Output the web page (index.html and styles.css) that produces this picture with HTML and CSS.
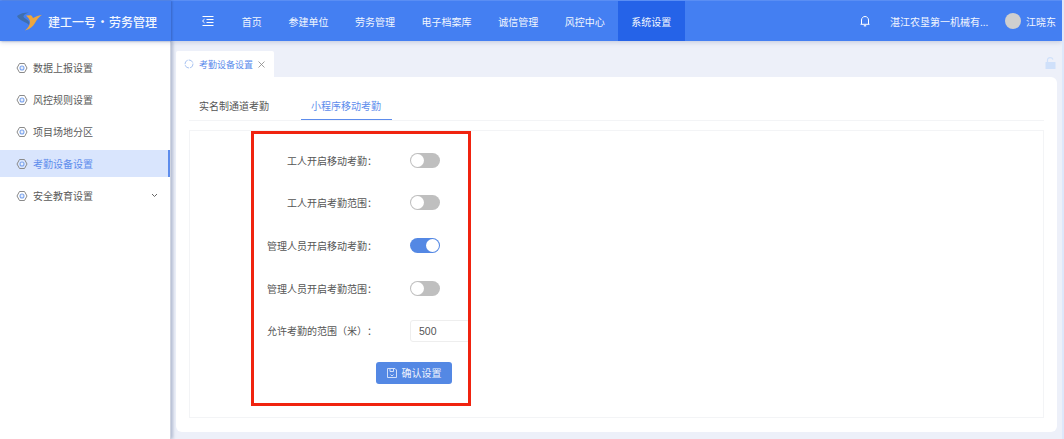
FILE: index.html
```html
<!DOCTYPE html>
<html>
    <head>
        <meta charset="UTF-8">
        <meta name="viewport" content="width=device-width, initial-scale=1.0"/>
        <title>建工一号 · 劳务管理</title>
        <link rel="stylesheet" href="styles.css">
    </head>
    <body>
        <header class="topbar">
            <div class="brand">
                <svg class="brand-logo" width="27" height="20" viewBox="0 0 27 20">
                    <path d="M1 5C4 2.500 8 1.500 13 1.500C10 2.500 8 3.500 7.500 5C7 7 11 8 12.500 10C13.500 11.500 13.500 13 13 14C11 11 3 10 1 5Z" fill="#3f6fae"/>
                    <path d="M10 4.500L15 4.200C16 5 16.500 6 17 7C19 6 22 4.500 26 3.800C23 6 20.500 9 19 12C17 15.500 14 18 9 19.500C12 17 14 14 14 11C14 8.500 12 6.500 10 4.500Z" fill="#eda63f"/>
                </svg>
                <span class="brand-name">建工一号 · 劳务管理</span>
            </div>
            <svg class="fold-icon" width="12" height="10" viewBox="0 0 12 10">
                <path d="M0.500 0.500H11.500M4.500 3.500H11.500M4.500 6.500H11.500M0.500 9.500H11.500M2.500 3.200L0.500 5L2.500 6.800" fill="none" stroke="#fff" stroke-width="1"/>
            </svg>
            <nav class="main-nav">
                <a class="nav-item">首页</a>
                <a class="nav-item">参建单位</a>
                <a class="nav-item">劳务管理</a>
                <a class="nav-item">电子档案库</a>
                <a class="nav-item">诚信管理</a>
                <a class="nav-item">风控中心</a>
                <a class="nav-item active">系统设置</a>
            </nav>
            <div class="user-area">
                <svg class="bell" width="10" height="12" viewBox="0 0 10 12">
                    <path d="M1.500 9V5C1.500 3 3 1.500 5 1.500S8.500 3 8.500 5V9M0.500 9.300H9.500" fill="none" stroke="#fff" stroke-width="1"/>
                    <path d="M3.800 10.800H6.200" stroke="#fff" stroke-width="1.200"/>
                </svg>
                <span class="company">湛江农垦第一机械有...</span>
                <span class="avatar"></span>
                <span class="username">江晓东</span>
            </div>
        </header>

        <div class="layout">
            <aside class="sidebar">
                <a class="side-item"><svg class="hex" viewBox="0 0 12 12"><use href="#hex-icon"/></svg>数据上报设置</a>
                <a class="side-item"><svg class="hex" viewBox="0 0 12 12"><use href="#hex-icon"/></svg>风控规则设置</a>
                <a class="side-item"><svg class="hex" viewBox="0 0 12 12"><use href="#hex-icon"/></svg>项目场地分区</a>
                <a class="side-item active"><svg class="hex" viewBox="0 0 12 12"><use href="#hex-icon"/></svg>考勤设备设置</a>
                <a class="side-item"><svg class="hex" viewBox="0 0 12 12"><use href="#hex-icon"/></svg>安全教育设置
                    <svg class="chevron" width="7" height="5" viewBox="0 0 7 5"><path d="M1 1L3.500 3.500L6 1" fill="none" stroke="#666" stroke-width="1"/></svg>
                </a>
            </aside>

            <main class="content">
                <div class="tab-strip">
                    <div class="page-tab">
                        <svg width="10" height="10" viewBox="0 0 10 10"><circle cx="5" cy="5" r="4" fill="none" stroke="#a9c4f2" stroke-width="1" stroke-dasharray="5 1"/></svg>
                        <span>考勤设备设置</span>
                        <svg class="tab-close" width="7" height="7" viewBox="0 0 7 7"><path d="M0.500 0.500L6.500 6.500M6.500 0.500L0.500 6.500" stroke="#888" stroke-width="0.800"/></svg>
                    </div>
                    <svg class="lock" width="11" height="12" viewBox="0 0 11 12">
                        <path d="M2.500 5V3C2.500 1.500 3.800 0.700 5 0.700S7.500 1.300 8 2.500" fill="none" stroke="#cfe0fa" stroke-width="1.200"/>
                        <rect x="0.500" y="5" width="10" height="7" rx="0.500" fill="#cfe0fa"/>
                    </svg>
                </div>
                <section class="card">
                    <div class="inner-tabs">
                        <span class="inner-tab">实名制通道考勤</span>
                        <span class="inner-tab active">小程序移动考勤</span>
                    </div>
                    <form class="settings">
                        <div class="form-row"><label>工人开启移动考勤：</label><span class="switch"></span></div>
                        <div class="form-row"><label>工人开启考勤范围：</label><span class="switch"></span></div>
                        <div class="form-row"><label>管理人员开启移动考勤：</label><span class="switch on"></span></div>
                        <div class="form-row"><label>管理人员开启考勤范围：</label><span class="switch"></span></div>
                        <div class="form-row"><label>允许考勤的范围（米）：</label><input class="range-input" type="text" value="500"></div>
                        <div class="form-actions">
                            <button class="confirm" type="button">
                                <svg width="10" height="10" viewBox="0 0 10 10"><path d="M0.500 0.500H8L9.500 2V9.500H0.500ZM3 0.500V3.500H6.500V0.500M3.500 6.500L5 8L6.500 6.500" fill="none" stroke="#dfe8fa" stroke-width="0.900"/></svg>
                                确认设置
                            </button>
                        </div>
                    </form>
                </section>
            </main>
        </div>

        <div class="highlight"></div>

        <svg class="defs" width="0" height="0">
            <symbol id="hex-icon" viewBox="0 0 12 12">
                <path d="M3.500 1.500H8.500L11 6L8.500 10.500H3.500L1 6Z" fill="none" stroke="#8a8a8a" stroke-width="1" stroke-linejoin="round"/>
                <circle cx="6" cy="6" r="2" fill="#e8effc" stroke="#7ea6ee" stroke-width="1.100"/>
            </symbol>
        </svg>
    </body>
</html>
```

FILE: styles.css
```css
*
{
    box-sizing: border-box;
}

html, body
{
    height: 100%;
}

body
{
    margin: 0;
    overflow: hidden;
    position: relative;
    background: #edf0f9;
    border-right: 2px solid #dde8fb;
    color: #555;
    font-family: "Noto Sans CJK SC", "Liberation Sans", sans-serif;
    font-size: 10px;
}

.topbar
{
    display: flex;
    align-items: center;
    height: 41px;
    background: #447ff2;
    border-top: 1px solid #5a8ef4;
    color: #f2f6fe;
    box-shadow: 0 1px 5px rgba(60, 80, 130, 0.25);
    position: relative;
    z-index: 2;
}

.brand
{
    display: flex;
    align-items: center;
    width: 171px;
    height: 100%;
    padding-left: 16px;
    box-shadow: 1px 0 2px rgba(40, 70, 140, 0.45);
}

.brand-logo
{
    margin-right: 5px;
}

.brand-name
{
    font-size: 12px;
    font-weight: 500;
    word-spacing: -2.200px;
    white-space: nowrap;
}

.fold-icon
{
    margin-left: 31px;
}

.main-nav
{
    display: flex;
    height: 100%;
    margin-left: 14.500px;
}

.nav-item
{
    display: flex;
    align-items: center;
    padding: 0 13.300px;
}

.nav-item.active
{
    background: #2563e8;
}

.user-area
{
    display: flex;
    align-items: center;
    margin-left: auto;
    padding-right: 6px;
}

.company
{
    margin-left: 20px;
    width: 84px;
    white-space: nowrap;
}

.avatar
{
    width: 16px;
    height: 16px;
    margin: 0 5px 0 31px;
    border-radius: 50%;
    background: #cfcfcf;
}

.username
{
    width: 30px;
    white-space: nowrap;
}

.layout
{
    display: flex;
    height: 398px;
}

.sidebar
{
    width: 171px;
    flex: none;
    padding-top: 13px;
    background: #fff;
    border-right: 1px solid #cfd4e0;
    box-shadow: 2px 0 3px rgba(90, 110, 150, 0.4);
    position: relative;
    z-index: 1;
}

.side-item
{
    display: flex;
    align-items: center;
    height: 27px;
    margin-bottom: 5px;
    padding-left: 16px;
    color: #5a5a5a;
}

.side-item.active
{
    background: #d9e5fd;
    color: #5d8cec;
    border-right: 2px solid #5d8cec;
}

.hex
{
    width: 12px;
    height: 12px;
    margin-right: 5px;
}

.chevron
{
    margin-left: auto;
    margin-right: 12px;
}

.content
{
    flex: 1;
    min-width: 0;
    padding: 10px 5px 0 5px;
}

.tab-strip
{
    display: flex;
    align-items: flex-end;
    justify-content: space-between;
    height: 26px;
}

.page-tab
{
    display: flex;
    align-items: center;
    width: 98px;
    height: 26px;
    padding-left: 8px;
    background: #fff;
    color: #5d8cec;
    font-size: 9px;
    border-radius: 2px 2px 0 0;
}

.page-tab span
{
    margin-left: 5px;
    white-space: nowrap;
}

.tab-close
{
    margin-left: 5px;
}

.lock
{
    margin: 0 1px 8px 0;
}

.card
{
    height: 355px;
    padding: 0 13px 14px;
    background: #fff;
    border-radius: 0 6px 6px 6px;
}

.inner-tabs
{
    display: flex;
    height: 44px;
    padding: 14px 0 0 10px;
    border-bottom: 1px solid #f3f4f6;
    gap: 32px;
}

.inner-tab
{
    height: 29px;
    padding-top: 7px;
    line-height: 16px;
    color: #555;
    white-space: nowrap;
}

.inner-tab.active
{
    width: 91px;
    padding-left: 10px;
    border-bottom: 1px solid #5d8cec;
    color: #5d8cec;
}

.settings
{
    height: 288px;
    margin-top: 9px;
    padding: 8px 0 0 77px;
    border: 1px solid #f3f4f6;
}

.form-row
{
    display: flex;
    align-items: center;
    height: 42.600px;
}

.form-row label
{
    width: 110px;
    text-align: right;
    text-spacing-trim: space-all;
    white-space: nowrap;
    color: #555;
}

.switch
{
    position: relative;
    width: 30px;
    height: 15px;
    margin-left: 33px;
    border-radius: 8px;
    background: #bfbfbf;
}

.switch::after
{
    content: "";
    position: absolute;
    top: 1px;
    left: 1px;
    width: 13px;
    height: 13px;
    border-radius: 50%;
    background: #fff;
}

.switch.on
{
    background: #5488e4;
}

.switch.on::after
{
    left: 16px;
}

.range-input
{
    width: 60px;
    height: 22px;
    margin-left: 33px;
    padding: 0 8px;
    border: 1px solid #eeeeee;
    border-radius: 3px;
    color: #555;
    font-family: "Liberation Sans", sans-serif;
    font-size: 10.500px;
}

.form-actions
{
    display: flex;
    padding: 10px 0 0 109px;
}

.confirm
{
    display: flex;
    align-items: center;
    justify-content: center;
    gap: 5px;
    width: 76px;
    height: 22px;
    padding: 0;
    border: 0;
    border-radius: 3px;
    background: #5488e4;
    color: #eef3fd;
    font-family: inherit;
    font-size: 10px;
}

.highlight
{
    position: absolute;
    left: 251px;
    top: 131px;
    width: 220px;
    height: 275px;
    border: 3px solid #f0230f;
}

.defs
{
    position: absolute;
}
```
